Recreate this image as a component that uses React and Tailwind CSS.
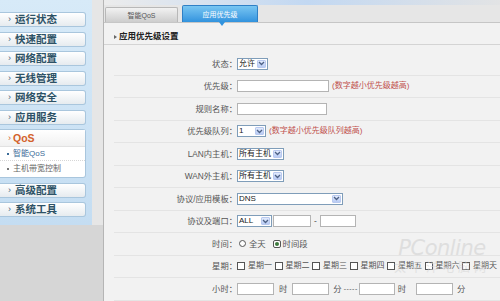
import React from "react";

const FONT = "font-['Liberation_Sans','Noto_Sans_CJK_SC',sans-serif]";

function Arrow() {
  return (
    <div className="my-px mr-px flex w-[9px] shrink-0 items-center justify-center rounded-[1px] border border-[#b9c9ef] bg-gradient-to-b from-[#e2ebfd] to-[#b8cbf4]">
      <svg width="7" height="5" viewBox="0 0 7 5">
        <path d="M1 1 L3.5 3.5 L6 1" fill="none" stroke="#4d6185" strokeWidth="1.3" />
      </svg>
    </div>
  );
}

function Sel({ w, text }) {
  return (
    <div className={`flex h-[12px] items-stretch border border-[#7f9db9] bg-white ${w}`}>
      <div className="flex min-w-0 flex-1 items-center overflow-hidden whitespace-nowrap pl-px text-[8px] leading-none text-[#222]">{text}</div>
      <Arrow />
    </div>
  );
}

function Inp({ w }) {
  return <div className={`h-[12px] border border-[#b4b4b4] bg-white ${w}`} />;
}

function Row({ label, children }) {
  return (
    <div className="mx-[10px] flex h-[22.5px] items-center border-b border-[#e4e4e4]">
      <div className="w-[123px] shrink-0 whitespace-nowrap text-right text-[8.3px] leading-none text-[#555]">{label}：</div>
      <div className="flex items-center whitespace-nowrap text-[8.3px] leading-none text-[#555]">{children}</div>
    </div>
  );
}

function Hint({ children }) {
  return <span className="ml-[3px] text-[8px] leading-none text-[#c0504d]">{children}</span>;
}

function Check({ label, w }) {
  return (
    <div className={`flex items-center ${w}`}>
      <div className="h-[8px] w-[8px] border border-[#555] bg-white" />
      <span className="ml-[3px] text-[8px] leading-none text-[#555]">{label}</span>
    </div>
  );
}

function MenuItem({ text }) {
  return (
    <div className="flex h-[15px] w-[86px] items-center rounded-r-[3px] border border-l-0 border-[#a9c6dd] bg-gradient-to-b from-white to-[#e6ebef] pl-[8px] text-[10.5px] font-bold leading-none text-[#2d5266]">
      <span className="mr-[4px] text-[9px] font-normal text-[#3e6378]">›</span>
      {text}
    </div>
  );
}

export default function App() {
  const days = ["星期一", "星期二", "星期三", "星期四", "星期五", "星期六", "星期天"];
  return (
    <div className={`${FONT} relative flex h-[301px] w-[500px] overflow-hidden bg-[#f2f2f2]`}>
      {/* left column */}
      <div className="flex w-[103px] shrink-0 flex-col bg-[#d6d6d6]">
        <div className="flex h-[225px]">
          <div className="flex w-[92px] flex-col gap-[4.5px] bg-gradient-to-b from-[#d7eaf8] to-[#c4ddf2] pt-[12px]">
            <MenuItem text="运行状态" />
            <MenuItem text="快速配置" />
            <MenuItem text="网络配置" />
            <MenuItem text="无线管理" />
            <MenuItem text="网络安全" />
            <MenuItem text="应用服务" />
            <div className="flex w-[86px] flex-col rounded-r-[3px] border border-l-0 border-[#a9c6dd] bg-white">
              <div className="flex h-[17px] items-center border-b border-[#e2e2e2] bg-gradient-to-b from-white to-[#f1f1f1] pl-[8px] text-[10.5px] font-bold leading-none text-[#d3612b]">
                <span className="mr-[2px] text-[9px] font-normal">›</span>QoS
              </div>
              <div className="flex h-[14px] items-center border-b border-dotted border-[#d6d6d6] pl-[7px] text-[8px] leading-none text-[#3b6c98]">
                <span className="mr-[4px] h-[2px] w-[2px] bg-[#3b6c98]" />智能QoS
              </div>
              <div className="flex h-[16px] items-center pl-[7px] text-[8px] leading-none text-[#666]">
                <span className="mr-[4px] h-[2px] w-[2px] bg-[#777]" />主机带宽控制
              </div>
            </div>
            <MenuItem text="高级配置" />
            <MenuItem text="系统工具" />
          </div>
          <div className="flex-1 bg-[#e6e6e6]" />
        </div>
        <div className="flex-1" />
      </div>

      {/* main */}
      <div className="flex flex-1 flex-col border-l border-[#b5b5b5]">
        <div className="h-[5px] bg-gradient-to-r from-[#ececec] via-[#c2d8f2] to-[#e4e4e4]" />
        <div className="flex h-[17px] items-end bg-[#e6e6e6] pl-[1px]">
          <div className="flex h-[15px] w-[73px] items-center justify-center rounded-t-[2px] border border-b-0 border-[#b8b8b8] bg-gradient-to-b from-[#f2f2f2] to-[#cdcdcd] text-[7px] leading-none text-[#555]">
            智能QoS
          </div>
          <div className="relative ml-[4px] flex h-[17px] w-[76px] items-center justify-center rounded-t-[2px] border border-b-0 border-[#2f80c6] bg-gradient-to-b from-[#78c6f2] to-[#3193de] text-[7px] leading-none text-white">
            应用优先级
            <div className="absolute left-[36px] top-[16px] h-0 w-0 border-x-[3px] border-t-[4px] border-x-transparent border-t-[#3193de]" />
          </div>
        </div>
        <div className="flex h-[23px] items-center border-t border-b border-t-[#c6c6c6] border-b-[#d4d4d4] pl-[10px] pt-[6px]">
          <span className="mr-[2px] h-0 w-0 border-y-[2.5px] border-l-[3px] border-y-transparent border-l-[#666]" />
          <span className="text-[8.5px] font-bold leading-none text-[#222]">应用优先级设置</span>
        </div>
        <div className="flex flex-col pt-[8px]">
          <Row label="状态">
            <Sel w="w-[31px]" text="允许" />
          </Row>
          <Row label="优先级">
            <Inp w="w-[92px]" />
            <Hint>(数字越小优先级越高)</Hint>
          </Row>
          <Row label="规则名称">
            <Inp w="w-[90px]" />
          </Row>
          <Row label="优先级队列">
            <Sel w="w-[29px]" text="1" />
            <Hint>(数字越小优先级队列越高)</Hint>
          </Row>
          <Row label="LAN内主机">
            <Sel w="w-[47px]" text="所有主机" />
          </Row>
          <Row label="WAN外主机">
            <Sel w="w-[47px]" text="所有主机" />
          </Row>
          <Row label="协议/应用模板">
            <Sel w="w-[106px]" text="DNS" />
          </Row>
          <Row label="协议及端口">
            <Sel w="w-[35px]" text="ALL" />
            <Inp w="ml-[1px] w-[38px]" />
            <span className="mx-[3px]">-</span>
            <Inp w="w-[36px]" />
          </Row>
          <Row label="时间">
            <div className="ml-[2px] h-[7px] w-[7px] rounded-full border border-[#555] bg-white" />
            <span className="ml-[3px]">全天</span>
            <div className="ml-[7px] flex h-[8px] w-[8px] items-center justify-center rounded-[2px] border border-[#555] bg-white">
              <div className="h-[4px] w-[4px] rounded-full bg-[#3d7a3d]" />
            </div>
            <span className="ml-[2px]">时间段</span>
          </Row>
          <Row label="星期">
            {days.map((d) => (
              <Check key={d} label={d} w="w-[37.5px]" />
            ))}
          </Row>
          <Row label="小时">
            <Inp w="w-[37px]" />
            <span className="ml-[5px] mr-[5px]">时</span>
            <Inp w="w-[37px]" />
            <span className="ml-[4px]">分</span>
            <span className="ml-[2px] mr-[1px] text-[7px] tracking-[0.5px]">-----</span>
            <Inp w="w-[36px]" />
            <span className="ml-[3px] mr-[10px]">时</span>
            <Inp w="w-[37px]" />
            <span className="ml-[4px]">分</span>
          </Row>
        </div>
      </div>

      {/* watermark */}
      <div className="pointer-events-none absolute left-[394px] top-[238px] flex flex-col items-center opacity-60">
        <span className="font-['DejaVu_Sans',sans-serif] text-[21px] italic leading-none tracking-[-0.5px] text-[#d2d2d2]">PConline</span>
        <span className="mt-[3px] text-[12px] leading-none tracking-[4px] text-[#d6d6d6]">太平洋电脑网</span>
      </div>
    </div>
  );
}
